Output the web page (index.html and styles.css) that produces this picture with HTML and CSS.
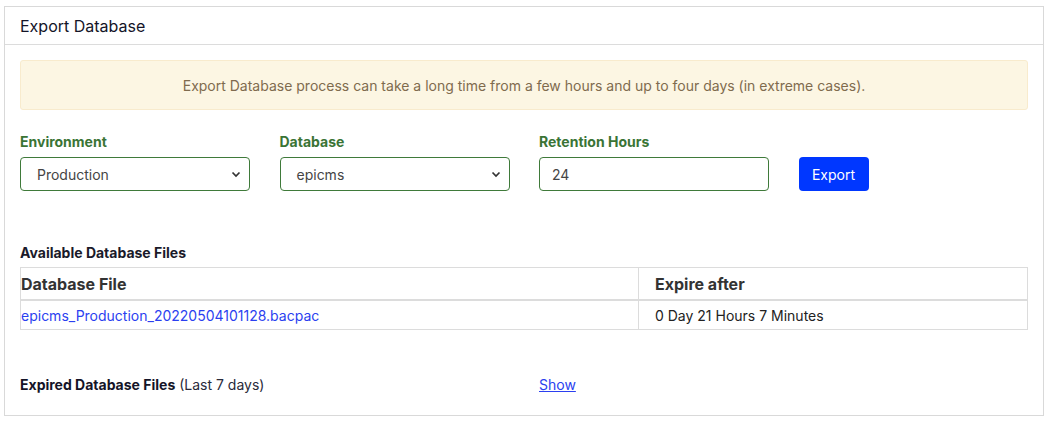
FILE: index.html
```html
<!DOCTYPE html>
<html>
<head>
<meta charset="utf-8">
<link rel="stylesheet" href="styles.css">
</head>
<body>
<div class="card">
  <div class="card-header">Export Database</div>
  <div class="card-body">
    <div class="alert">Export Database process can take a long time from a few hours and up to four days (in extreme cases).</div>
    <div class="form-row">
      <div class="field">
        <label class="label">Environment</label>
        <div class="select"><span>Production</span>
          <svg class="chev" width="10" height="7" viewBox="0 0 10 7"><path d="M1.5 1.5 L5 5 L8.5 1.5" fill="none" stroke="#333" stroke-width="1.7"/></svg>
        </div>
      </div>
      <div class="field">
        <label class="label">Database</label>
        <div class="select"><span>epicms</span>
          <svg class="chev" width="10" height="7" viewBox="0 0 10 7"><path d="M1.5 1.5 L5 5 L8.5 1.5" fill="none" stroke="#333" stroke-width="1.7"/></svg>
        </div>
      </div>
      <div class="field">
        <label class="label">Retention Hours</label>
        <div class="input">24</div>
      </div>
      <div class="field btn-field">
        <button class="btn">Export</button>
      </div>
    </div>
    <div class="section-title">Available Database Files</div>
    <table class="table">
      <thead>
        <tr><th class="c1">Database File</th><th class="c2">Expire after</th></tr>
      </thead>
      <tbody>
        <tr><td class="c1"><a href="#" class="file-link">epicms_Production_20220504101128.bacpac</a></td><td class="c2">0 Day 21 Hours 7 Minutes</td></tr>
      </tbody>
    </table>
    <div class="expired-row">
      <div class="expired"><b>Expired Database Files</b> (Last 7 days)</div>
      <a href="#" class="show">Show</a>
    </div>
  </div>
</div>
</body>
</html>
```

FILE: styles.css
```css
html, body {
  margin: 0;
  padding: 0;
  background: #fff;
  font-family: Inter, "Noto Sans", sans-serif;
}
body {
  padding: 6px 11px 0 4px;
}
.card {
  border: 1px solid #d9d9d9;
  height: 410px;
  box-sizing: border-box;
}
.card-header {
  height: 37px;
  border-bottom: 1px solid #dcdcdc;
  padding-left: 15px;
  font-size: 16px;
  line-height: 39px;
  color: #141428;
}
.card-body {
  padding: 15px 15px 0 15px;
}
.alert {
  height: 50px;
  box-sizing: border-box;
  background: #fcf6e3;
  border: 1px solid #f8ebcd;
  border-radius: 3px;
  color: #7f6b4e;
  font-size: 14px;
  line-height: 50px;
  text-align: center;
}
.form-row {
  display: grid;
  grid-template-columns: 230px 230px 230px 70px;
  column-gap: 29.5px;
  margin-top: 22px;
}
.field {
  display: flex;
  flex-direction: column;
}
.btn-field {
  justify-content: flex-end;
}
.label {
  font-size: 14px;
  font-weight: 700;
  line-height: 20px;
  color: #3a7435;
  margin-bottom: 5px;
}
.select, .input {
  height: 34px;
  box-sizing: border-box;
  border: 1px solid #3f7a3a;
  border-radius: 4px;
  font-size: 14px;
  color: #454545;
  display: flex;
  align-items: center;
}
.select {
  padding: 0 8px 0 16px;
  justify-content: space-between;
}
.input {
  padding-left: 12px;
}
.btn {
  height: 34px;
  width: 70px;
  border: none;
  border-radius: 4px;
  background: #0037ff;
  color: #fff;
  font-family: Inter, "Noto Sans", sans-serif;
  font-size: 14px;
  padding: 0;
}
.section-title {
  margin-top: 53px;
  font-size: 14px;
  font-weight: 700;
  color: #1a1a2a;
  line-height: 17px;
  margin-bottom: 6px;
}
.table {
  width: 1008px;
  border-collapse: collapse;
  border: 1px solid #dcdcdc;
}
.table th {
  height: 31px;
  text-align: left;
  font-size: 16px;
  font-weight: 700;
  color: #333;
  border-bottom: 2px solid #dcdcdc;
  padding: 0;
}
.table td {
  height: 28px;
  font-size: 14px;
  color: #222;
  padding: 0;
}
.table .c1 {
  width: 617px;
  padding-left: 0;
  border-right: 1px solid #dcdcdc;
}
.table .c2 {
  padding-left: 16px;
}
.file-link {
  color: #2b3ff0;
  text-decoration: none;
}
.expired-row {
  display: flex;
  align-items: center;
  margin-top: 46px;
  font-size: 14px;
  color: #2a2a3a;
}
.expired {
  width: 519px;
}
.expired b {
  color: #141428;
}
.show {
  color: #2b3ff0;
  text-decoration: underline;
}
```
